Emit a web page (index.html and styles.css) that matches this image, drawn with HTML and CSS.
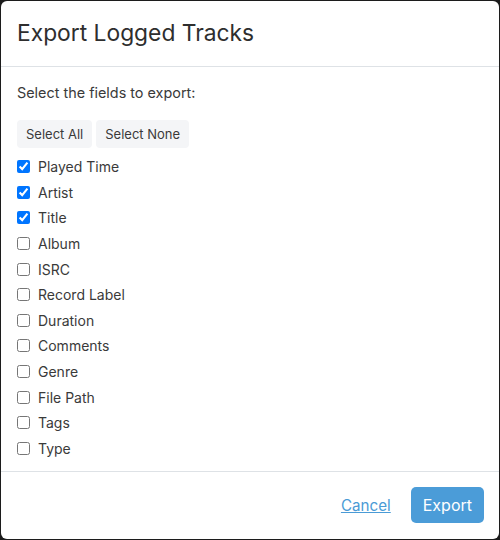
FILE: index.html
```html
<!DOCTYPE html>
<html>
<head>
<meta charset="utf-8">
<link rel="stylesheet" href="styles.css">
</head>
<body>
<div class="modal">
  <div class="modal-header">
    <h5 class="modal-title">Export Logged Tracks</h5>
  </div>
  <div class="modal-body">
    <p class="intro">Select the fields to export:</p>
    <div class="btn-row">
      <button class="btn-light">Select All</button>
      <button class="btn-light">Select None</button>
    </div>
    <div class="fields">
      <label class="field"><input type="checkbox" checked><span>Played Time</span></label>
      <label class="field"><input type="checkbox" checked><span>Artist</span></label>
      <label class="field"><input type="checkbox" checked><span>Title</span></label>
      <label class="field"><input type="checkbox"><span>Album</span></label>
      <label class="field"><input type="checkbox"><span>ISRC</span></label>
      <label class="field"><input type="checkbox"><span>Record Label</span></label>
      <label class="field"><input type="checkbox"><span>Duration</span></label>
      <label class="field"><input type="checkbox"><span>Comments</span></label>
      <label class="field"><input type="checkbox"><span>Genre</span></label>
      <label class="field"><input type="checkbox"><span>File Path</span></label>
      <label class="field"><input type="checkbox"><span>Tags</span></label>
      <label class="field"><input type="checkbox"><span>Type</span></label>
    </div>
  </div>
  <div class="modal-footer">
    <a class="link" href="#">Cancel</a>
    <button class="btn-primary">Export</button>
  </div>
</div>
</body>
</html>
```
FILE: styles.css
```css
html, body {
  margin: 0;
  padding: 0;
}
body {
  background: #1c1c1c;
  font-family: Inter, "Noto Sans", sans-serif;
  color: #3a3a3a;
  width: 500px;
  height: 540px;
  overflow: hidden;
}
.modal {
  margin: 1px;
  width: 498px;
  height: 538px;
  background: #fff;
  border-radius: 6px;
  display: flex;
  flex-direction: column;
  box-sizing: border-box;
}
.modal-header {
  height: 66px;
  box-sizing: border-box;
  border-bottom: 1px solid #dee2e6;
  display: flex;
  align-items: center;
  padding: 0 16px;
}
.modal-title {
  margin: 0;
  font-size: 22.8px;
  font-weight: 400;
  color: #2e2e2e;
  line-height: 1;
  padding-bottom: 1px;
}
.modal-body {
  flex: 1;
  padding: 16px 16px 0 16px;
}
.intro {
  margin: 0 0 17px 0;
  font-size: 14.4px;
  line-height: 20px;
}
.btn-row {
  display: flex;
  gap: 4px;
}
.btn-light {
  height: 28px;
  padding: 0 9px;
  border: none;
  border-radius: 4px;
  background: #f4f5f7;
  color: #3a3a3a;
  font-family: inherit;
  font-size: 13px;
}
.fields {
  margin-top: 6px;
  display: flex;
  flex-direction: column;
}
.field {
  height: 25.6px;
  display: flex;
  align-items: center;
  font-size: 14px;
}
.field input {
  margin: 0 8px 0 0;
  width: 13px;
  height: 13px;
}
.modal-footer {
  height: 68px;
  box-sizing: border-box;
  border-top: 1px solid #dee2e6;
  display: flex;
  align-items: center;
  justify-content: flex-end;
  padding: 0 15px 1px 0;
  gap: 20px;
}
.link {
  color: #4a9bd6;
  font-size: 15.2px;
  text-decoration: underline;
}
.btn-primary {
  height: 36px;
  padding: 0 12px;
  border: none;
  border-radius: 5px;
  background: #4b9cd8;
  color: #fff;
  font-family: inherit;
  font-size: 16px;
}
```
